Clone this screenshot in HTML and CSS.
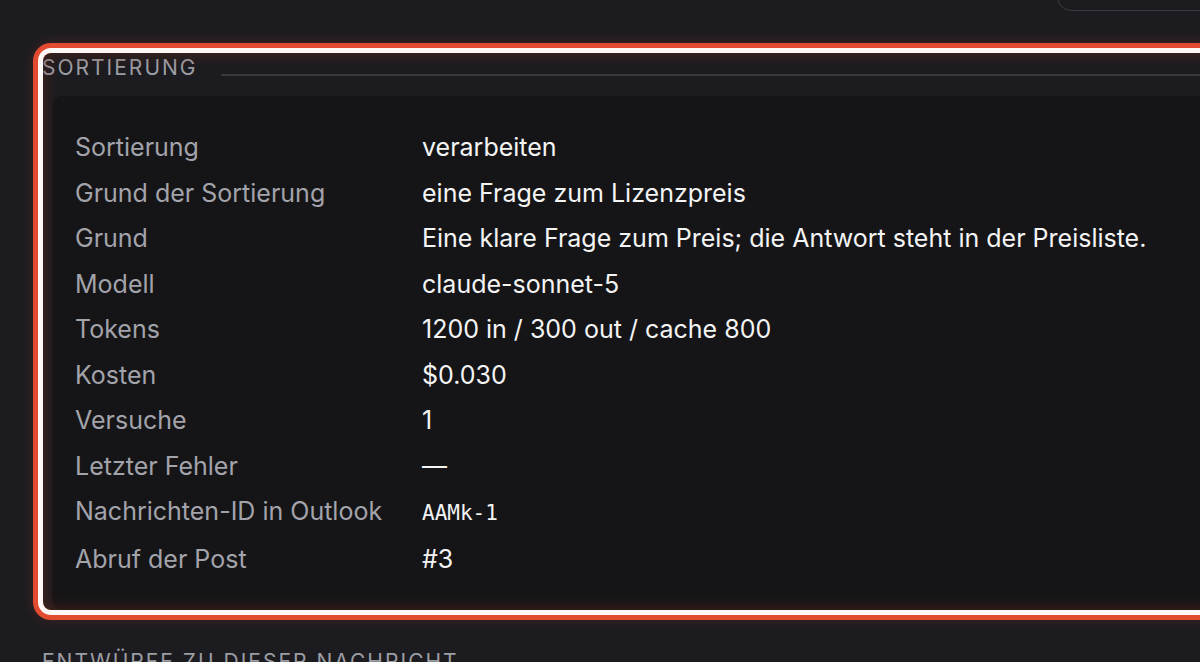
FILE: index.html
```html
<!DOCTYPE html>
<html lang="de">
<head>
<meta charset="utf-8">
<title>Sortierung</title>
<link rel="stylesheet" href="styles.css">
</head>
<body>
<div class="topbar"><div class="searchbox"></div></div>
<main class="main">
  <section class="panel">
    <h2 class="section-title"><span class="section-title-text">Sortierung</span><span class="section-title-line"></span></h2>
    <div class="card">
      <dl class="details">
        <dt>Sortierung</dt><dd>verarbeiten</dd>
        <dt>Grund der Sortierung</dt><dd>eine Frage zum Lizenzpreis</dd>
        <dt>Grund</dt><dd>Eine klare Frage zum Preis; die Antwort steht in der Preisliste.</dd>
        <dt>Modell</dt><dd>claude-sonnet-5</dd>
        <dt>Tokens</dt><dd>1200 in / 300 out / cache 800</dd>
        <dt>Kosten</dt><dd>$0.030</dd>
        <dt>Versuche</dt><dd>1</dd>
        <dt>Letzter Fehler</dt><dd>—</dd>
        <dt>Nachrichten-ID in Outlook</dt><dd><code class="mono">AAMk-1</code></dd>
        <dt>Abruf der Post</dt><dd>#3</dd>
      </dl>
    </div>
  </section>
  <h2 class="section-title next"><span class="section-title-text">Entwürfe zu dieser Nachricht</span><span class="section-title-line"></span></h2>
</main>
</body>
</html>
```

FILE: styles.css
```css
html, body {
  margin: 0;
  padding: 0;
}
body {
  width: 1200px;
  height: 662px;
  overflow: hidden;
  background: #1c1c20;
  font-family: Inter, "Noto Sans", sans-serif;
  color: #f4f4f5;
}
.topbar {
  height: 12px;
  display: flex;
  justify-content: flex-end;
}
.searchbox {
  width: 170px;
  height: 42px;
  margin-top: -31px;
  margin-right: -27px;
  border: 1px solid #3a3a40;
  border-radius: 14px;
  box-sizing: border-box;
}
.main {
  padding-left: 43px;
}
.panel {
  position: relative;
  margin-top: 41px;
  height: 557px;
  width: 1200px;
  border-radius: 8px;
  display: flex;
  flex-direction: column;
}
.panel::after {
  content: "";
  position: absolute;
  inset: 0;
  border-radius: 8px;
  pointer-events: none;
  box-shadow:
    0 0 0 5px #fdf8f5,
    0 0 0 10px #e24b2f,
    0 0 14px 10px rgba(226, 75, 47, 0.18),
    inset 0 0 14px 2px rgba(120, 40, 25, 0.45);
}
.section-title {
  margin: 3px 0 0 -1px;
  display: flex;
  align-items: flex-end;
  gap: 23px;
  font-size: 21px;
  line-height: 24px;
  font-weight: 400;
  letter-spacing: 2px;
  text-transform: uppercase;
  color: #9d9da4;
}
.section-title-text {
  white-space: nowrap;
}
.section-title-line {
  flex: 1;
  height: 2px;
  margin-bottom: 4px;
  background: #38383d;
}
.card {
  margin: 16px 0 0 9px;
  flex: 1;
  background: #151517;
  border-radius: 10px 0 0 10px;
  padding: 29px 24px 0 23px;
}
.details {
  margin: 0;
  display: grid;
  grid-template-columns: 347px 1fr;
  font-size: 25px;
  line-height: 45.5px;
}
.details dt {
  color: #a3a3ab;
  white-space: nowrap;
}
.details dd {
  margin: 0;
  color: #f4f4f5;
  white-space: nowrap;
}
.mono {
  font-family: "DejaVu Sans Mono", "Liberation Mono", monospace;
  font-size: 21px;
}
.section-title.next {
  margin-top: 40px;
}
```
